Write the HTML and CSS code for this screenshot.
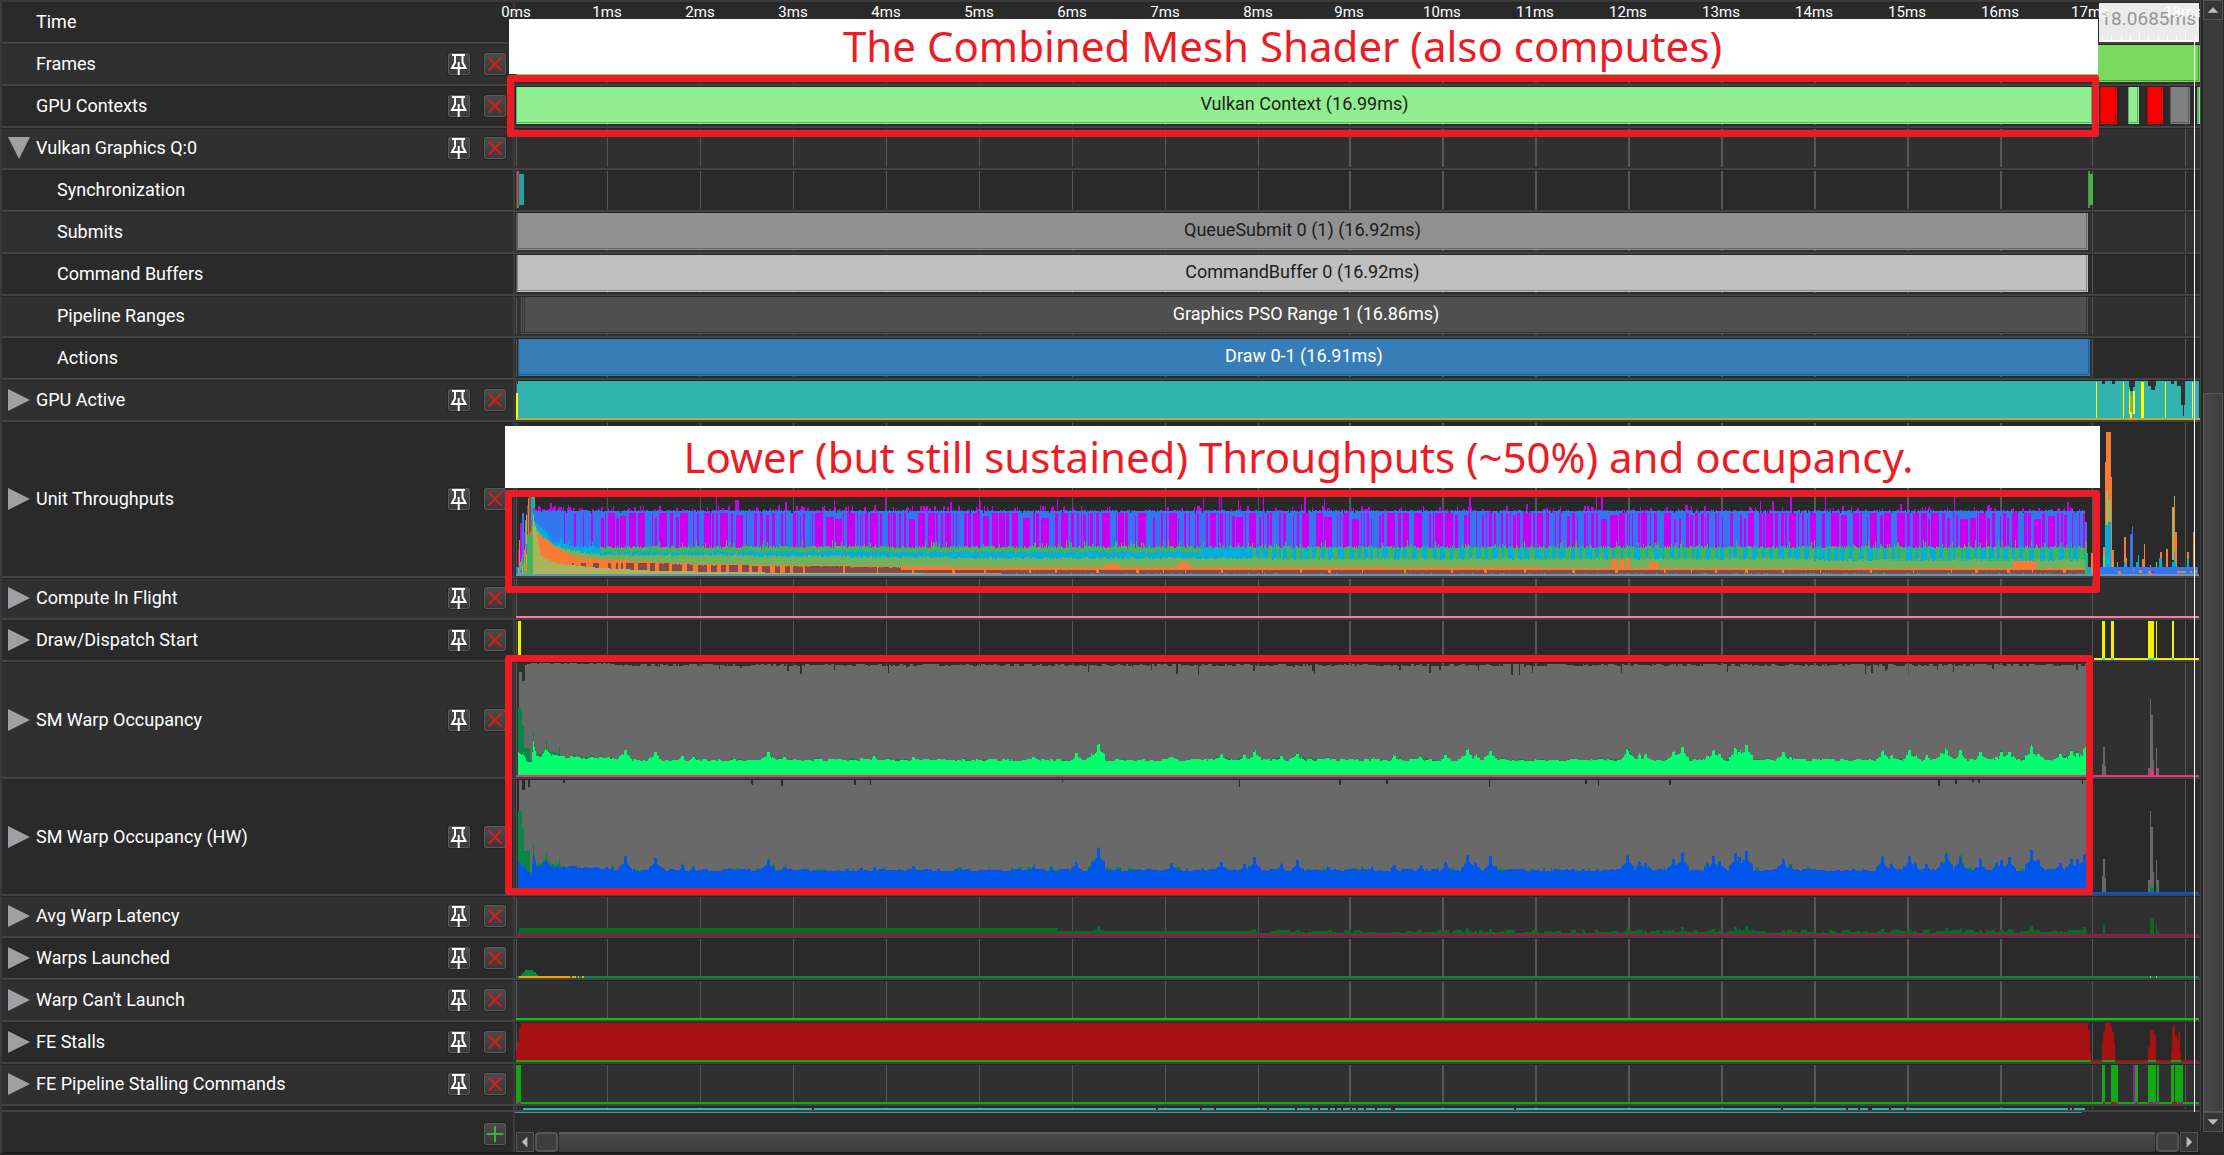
FILE: index.html
```html
<!DOCTYPE html>
<html lang="en">
<head>
<meta charset="utf-8">
<title>GPU Trace Timeline</title>
<link rel="stylesheet" href="styles.css">
</head>
<body>
<svg class="defs" aria-hidden="true">
  <symbol id="pin" viewBox="0 0 22 22">
    <path d="M4 2H17M7 2.500V9.500L4 15H17.500L14.500 9.500V2.500M10.700 9V22" fill="none" stroke="#fff" stroke-width="2"/>
  </symbol>
  <symbol id="cross" viewBox="0 0 22 22">
    <path d="M4.500 4.500L17.500 17.500M17.500 4.500L4.500 17.500" fill="none" stroke="#e01b1b" stroke-width="1.800"/>
  </symbol>
  <symbol id="plus" viewBox="0 0 22 22">
    <path d="M11 3V19M2.500 11H19.500" fill="none" stroke="#3fae49" stroke-width="2"/>
  </symbol>
  <symbol id="closed" viewBox="0 0 22 22"><path d="M0 0L22 11L0 22Z" fill="#a09fa4"/></symbol>
  <symbol id="open" viewBox="0 0 22 22"><path d="M0 0H22L11 22Z" fill="#a09fa4"/></symbol>
</svg>
<main class="timeline">
  <div class="rows" id="rows">
    <div class="row row-time">
      <div class="label"><span class="name">Time</span></div>
      <div class="track" id="ruler"></div>
    </div>
  </div>
  <div class="vscroll">
    <button class="arrow" aria-label="Scroll up"><svg viewBox="0 0 20 20"><path d="M4 13L10 7L16 13Z"/></svg></button>
    <div class="vtrack"><div class="vthumb"></div></div>
    <button class="arrow" aria-label="Scroll down"><svg viewBox="0 0 20 20"><path d="M4 7L10 13L16 7Z"/></svg></button>
  </div>
  <div class="playhead"></div>
  <div class="banner banner-top">The Combined Mesh Shader (also computes)</div>
  <div class="frame frame-context"></div>
  <div class="banner banner-mid">Lower (but still sustained) Throughputs (~50%) and occupancy.</div>
  <div class="frame frame-units"></div>
  <div class="frame frame-warps"></div>
  <footer class="footer">
    <div class="label"><button class="tool" aria-label="Add row"><svg><use href="#plus"/></svg></button></div>
    <div class="foot-plot">
      <div class="overflow-line"></div>
      <div class="hscroll">
        <button class="arrow" aria-label="Scroll left"><svg viewBox="0 0 20 20"><path d="M13 3L6 10L13 17Z"/></svg></button>
        <div class="grip"></div>
        <div class="htrack"></div>
        <div class="grip"></div>
        <button class="arrow" aria-label="Scroll right"><svg viewBox="0 0 20 20"><path d="M7 3L14 10L7 17Z"/></svg></button>
      </div>
    </div>
  </footer>
</main>
<script src="timeline.js"></script>
</body>
</html>
```
FILE: styles.css
```css
* { box-sizing: border-box; }
body {
  margin: 0;
  background: #262626;
  color: #fff;
  font: 18px/20px Roboto, "Liberation Sans", sans-serif;
}
button { padding: 0; margin: 0; border: 0; font: inherit; color: inherit; }
.defs { position: absolute; width: 0; height: 0; }
.timeline {
  position: relative;
  display: grid;
  grid-template-columns: minmax(0, 1fr) 24px;
  border-left: 2px solid #3a3a3a;
  background: #2a2a2a;
}
.row {
  display: grid;
  grid-template-columns: 513px minmax(0, 1fr);
  height: 42px;
  border-bottom: 2px solid #434343;
  background: #303030;
  box-shadow: inset 0 1px #262626;
}
.row:nth-child(odd) { background: #2a2a2a; }
.row-time { height: 44px; border-top: 2px solid #3a3a3a; }
.row-units { height: 156px; }
.row-warps { height: 117px; }
.row-cut { height: 6px; }
.label {
  display: flex;
  align-items: center;
  gap: 14px;
  padding: 0 7px 0 6px;
  border-right: 2px solid #3c3c3c;
}
.label .name { flex: 1; padding-left: 28px; white-space: nowrap; }
.label .twist + .name { padding-left: 0; }
.label .nested { padding-left: 49px; }
.twist { width: 22px; height: 22px; margin-right: -8px; background: none; }
.twist svg, .tool svg { display: block; width: 22px; height: 22px; }
.tool {
  width: 22px;
  height: 22px;
  border-radius: 3px;
  background: linear-gradient(#4a4a4a, #383838);
  box-shadow: inset 0 0 0 1px #5a5a5a, 0 0 0 1px #242424;
}
.track { position: relative; display: flex; min-width: 0; padding: 1px 0 2px; }
.plot { position: absolute; inset: 0; width: 100%; height: 100%; }
.bar {
  position: relative;
  flex: none;
  height: 37px;
  text-align: center;
  font-size: 18px;
  line-height: 33px;
  color: #1c1c1c;
  white-space: nowrap;
  overflow: hidden;
  background: var(--fill);
  box-shadow: inset 1px 0 var(--edge), inset -1px 0 var(--fill), inset 0 -1px var(--fill), inset -2px -2px var(--edge);
}
.bar.light { color: #fff; }
.tick {
  position: absolute;
  top: 1px;
  font-size: 15px;
  line-height: 18px;
  transform: translateX(-50%);
}
.cursor-time {
  position: absolute;
  right: 1px;
  top: 1px;
  width: 100px;
  height: 39px;
  padding: 6px 3px 0 0;
  text-align: right;
  font-size: 19px;
  color: #969696;
  background: #ebebeb;
  border-bottom: 2px solid #fff;
}
.vscroll {
  position: relative;
  display: flex;
  flex-direction: column;
  margin-bottom: -20px;
  padding: 0 1px 0 2px;
  border-left: 1px solid #444;
  background: #262626;
}
.vtrack { flex: 1; display: flex; flex-direction: column; padding-top: 373px; background: #3b3b3b; }
.vthumb { flex: 1; background: linear-gradient(90deg, #484848, #3e3e3e); border: 1px solid #5a5a5a; }
.arrow {
  flex: none;
  width: 20px;
  height: 20px;
  border: 1px solid #555;
  background: #363636;
}
.arrow svg { display: block; width: 18px; height: 18px; fill: #bdbdbd; }
.playhead { position: absolute; right: 29px; top: 40px; width: 1px; height: 1072px; background: #fff; }
.banner {
  position: absolute;
  background: #fff;
  color: #ed1c24;
  text-align: center;
  white-space: nowrap;
  font-family: "Noto Sans", "Open Sans", sans-serif;
}
.banner-top { left: 507px; right: 126px; top: 19px; height: 55px; padding-right: 42px; font-size: 42px; line-height: 54px; }
.banner-mid { left: 503px; right: 124px; top: 426px; height: 62px; padding-right: 8px; font-size: 42px; line-height: 62px; }
.frame { position: absolute; border: 7px solid #ed1c24; border-radius: 3px; }
.frame-context { left: 505px; right: 125px; top: 75px; height: 62px; }
.frame-units { left: 503px; right: 124px; top: 490px; height: 103px; }
.frame-warps { left: 503px; right: 131px; top: 655px; height: 240px; }
.footer {
  grid-column: 1;
  display: grid;
  grid-template-columns: 513px minmax(0, 1fr);
  height: 42px;
  border-bottom: 2px solid #1c1c1c;
}
.footer .label { justify-content: flex-end; padding-top: 4px; }
.foot-plot { display: flex; flex-direction: column; justify-content: space-between; }
.overflow-line { height: 1px; width: 93%; background: #3a9d9d; }
.hscroll { display: flex; gap: 1px; height: 20px; padding: 0 2px 0 1px; background: #262626; }
.hscroll .arrow { width: 18px; }
.hscroll .arrow svg { width: 16px; }
.grip { width: 23px; border: 2px solid #565656; border-radius: 4px; background: #3e3e3e; }
.htrack { flex: 1; background: linear-gradient(#484848, #3e3e3e); border-top: 2px solid #5a5a5a; }
```
FILE: timeline.js
```js
// Horizontal plot units: X0 is the left edge of the tracks, SPAN their width.
const X0 = 515, SPAN = 1685;
const GRID = [516, 607, 700, 793, 886, 979, 1072, 1165, 1258, 1349, 1442, 1535, 1628, 1721, 1814, 1907, 2000, 2092, 2185];

let seed = 20231;
function rnd() {
  seed = (seed * 1664525 + 1013904223) % 4294967296;
  return seed / 4294967296;
}
const pick = n => Math.floor(rnd() * n);

// Collects rectangles and writes them as one path per run of equal colour.
class Plot {
  constructor(height, top) { this.h = height; this.top = top; this.parts = []; }
  r(x, y1, x2, y2, color) {
    if (x2 <= x || y2 <= y1) return;
    const d = `M${x} ${y1 - this.top}H${x2}V${y2 - this.top}H${x}Z`;
    const last = this.parts[this.parts.length - 1];
    if (last && last.color === color) last.d += d;
    else this.parts.push({ color, d });
  }
  svg() {
    return `<svg class="plot" viewBox="${X0} 0 ${SPAN} ${this.h}" preserveAspectRatio="none" shape-rendering="crispEdges" aria-hidden="true">` +
      this.parts.map(p => `<path fill="${p.color}" d="${p.d}"/>`).join('') + '</svg>';
  }
}

function lerp(points, x) {
  if (x <= points[0][0]) return points[0][1];
  for (let i = 1; i < points.length; i++) {
    if (x <= points[i][0]) {
      const [a, ya] = points[i - 1], [b, yb] = points[i];
      return Math.round(ya + (yb - ya) * (x - a) / (b - a));
    }
  }
  return points[points.length - 1][1];
}

function rects(p, color, list) { list.forEach(([a, b, c, d]) => p.r(a, b, c, d, color)); }

function sync(p) {
  p.r(516, 171, 517, 208, '#d01c1c');
  p.r(517, 171, 519, 208, '#1f9c9c');
  p.r(519, 174, 524, 205, '#1aa6a6');
  p.r(518, 174, 519, 205, '#d01c1c');
  p.r(2088, 171, 2090, 208, '#3d9a3b');
  p.r(2089, 174, 2093, 205, '#4daf4a');
}

function active(p) {
  p.r(517, 384, 518, 418, '#33b3b0');
  p.r(518, 381, 2199, 418, '#33b3b0');
  rects(p, '#303030', [[2102, 381, 2105, 384], [2112, 381, 2115, 384], [2129, 381, 2135, 387], [2130, 387, 2133, 391],
    [2148, 381, 2156, 386], [2151, 386, 2155, 390], [2171, 381, 2174, 384], [2177, 381, 2185, 386], [2181, 386, 2185, 405], [2183, 405, 2184, 416]]);
  p.r(516, 393, 518, 420, '#ff0');
  p.r(517, 418, 2200, 420, '#b3b131');
  rects(p, '#ff0', [[2096, 382, 2097, 418], [2123, 382, 2124, 418], [2129, 390, 2130, 414], [2133, 391, 2135, 414], [2130, 412, 2132, 418],
    [2141, 382, 2144, 418], [2165, 382, 2166, 418], [2192, 382, 2193, 418]]);
  rects(p, '#a9b42f', [[2130, 396, 2132, 412]]);
  rects(p, '#ff9d00', [[2129, 418, 2135, 420]]);
}

function units(p) {
  const M = '#cc00ee', B = '#3377f0', G = '#44b45c', C = '#00aedd', L = '#70b35c', O = '#f77a35', W = '#874a4a', V = '#a9b45b';
  // Ramp-up at the start of the draw.
  [[516, 567, B], [518, 550, M], [519, 540, O], [520, 523, M], [522, 513, B], [524, 532, M], [525, 520, G], [526, 515, V],
   [527, 505, W], [528, 498, O], [529, 492, W], [531, 497, C], [533, 497, G]].forEach(([x, y, c]) => {
    p.r(x, y, x + 2, 574, c);
  });
  for (let x = 518; x < 533; x++) {
    let y = 574 - (x - 516) * 3;
    for (let i = 0; i < 6; i++) {
      p.r(x, y, x + 1, y + 8 + pick(12), [G, V, O, L, B, G][pick(6)]);
      y += 10;
    }
  }
  p.r(527, 535, 534, 574, G);
  let magenta = false, run = 0, brown = false, runB = 0, green = false, runG = 0, inset = 0;
  for (let x = 533; x < 2085; x++) {
    const j = pick(3);
    const blue = 511 - (rnd() < 0.3 ? 1 : 0) + (rnd() < 0.06 ? 2 : 0);
    const early = x < 575;
    const top = rnd() < (early ? 0.5 : 0.17) ? blue - 1 - pick(5) - (rnd() < 0.13 ? 4 + pick(9) : 0) : blue;
    if (top < blue) p.r(x, top, x + 1 + (rnd() < 0.5), blue, M);
    p.r(x, blue, x + 1, 574, B);
    if (run-- <= 0) {
      magenta = !magenta;
      const dense = x > 600;
      run = magenta ? (dense ? pick(3) + (rnd() < 0.25 ? 5 : 0) : pick(3)) : (x < 563 ? 3 + pick(10) : dense ? pick(3) + (rnd() < 0.2 ? 4 : 0) : 5 + pick(4));
      inset = rnd() < 0.25 ? 2 + pick(5) : 0;
    }
    const stack = lerp([[533, 520], [545, 530], [552, 541], [580, 546], [700, 546], [2085, 546]], x) + j;
    if (magenta && x > 560) p.r(x, 513 + inset, x + 1, stack + 2, M);
    if (runG-- <= 0) { green = !green; runG = 1 + pick(x > 1250 ? 5 : 9); }
    const gTop = stack - (rnd() < 0.1 ? 3 + pick(4) : 0);
    const cTop = x < 600 ? gTop : x > 1250 && green ? 560 : stack + (x > 1200 ? pick(3) : 4 + pick(3));
    p.r(x, gTop, x + 1, 574, x < 600 ? (green ? G : C) : G);
    p.r(x, cTop, x + 1, 574, C);
    const lTop = lerp([[533, 525], [545, 540], [560, 548], [600, 555], [700, 555], [1000, 558], [2085, 560]], x) + pick(3) - 1;
    p.r(x, lTop, x + 1, 574, L);
    let bump = 0;
    if (x > 1104 && x < 1120) bump = 3;
    if (x > 1177 && x < 1190) bump = 5;
    if (x > 1608 && x < 1630) bump = x % 7 > 1 ? 10 : 0;
    if (x > 1648 && x < 1658) bump = 6;
    if (x > 2012 && x < 2036) bump = 7;
    const oTop = lerp([[533, 530], [545, 538], [555, 547], [575, 556], [600, 559], [700, 564], [1000, 567], [2085, 568]], x) - bump + (rnd() < 0.2 ? 1 : 0);
    p.r(x, oTop, x + 1, 574, O);
    const vTop = lerp([[533, 515], [540, 555], [548, 560], [560, 564], [600, 568], [660, 571], [800, 573], [1050, 574]], x);
    if (runB-- <= 0) { brown = !brown; runB = brown ? (x > 800 ? 20 + pick(30) : 1 + pick(9)) : (x > 800 ? pick(3) : 2 + pick(x > 615 ? 3 : 9)); }
    if (brown && x > 570) p.r(x, Math.max(oTop + 1, x > 900 ? 570 : 563), x + 1, 573, W);
    p.r(x, vTop, x + 1, 574, V);
    if (x > 1000) p.r(x, 573, x + 1, 574, rnd() < 0.1 ? G : W);
  }
  p.r(2085, 522, 2087, 574, B);
  p.r(2085, 541, 2087, 574, G);
  p.r(2087, 553, 2088, 574, C);
  p.r(2088, 567, 2091, 574, C);
  p.r(2091, 553, 2093, 574, O);
  rects(p, O, [[2103, 547, 2105, 567], [2105, 462, 2106, 567], [2106, 432, 2111, 567], [2111, 477, 2112, 567], [2112, 550, 2114, 567],
    [2117, 562, 2118, 567], [2124, 537, 2126, 567], [2126, 558, 2127, 567], [2142, 559, 2144, 567], [2144, 544, 2145, 567],
    [2160, 552, 2162, 567], [2166, 549, 2168, 567], [2174, 500, 2175, 567], [2175, 532, 2177, 567], [2187, 552, 2189, 567], [2193, 532, 2194, 567]]);
  rects(p, V, [[2103, 555, 2105, 574], [2106, 490, 2108, 567], [2108, 500, 2111, 567], [2112, 562, 2114, 574], [2172, 507, 2174, 560], [2174, 496, 2175, 502], [2150, 565, 2151, 567], [2156, 562, 2157, 574]]);
  rects(p, C, [[2105, 525, 2108, 567], [2108, 522, 2111, 567], [2124, 562, 2126, 567], [2136, 562, 2138, 567], [2138, 555, 2139, 567],
    [2159, 558, 2162, 567], [2172, 562, 2176, 567], [2174, 552, 2175, 567], [2187, 559, 2189, 567]]);
  rects(p, B, [[2100, 567, 2198, 574], [2130, 534, 2132, 567], [2132, 526, 2133, 567]]);
  rects(p, O, [[2118, 571, 2121, 574], [2133, 569, 2134, 571], [2139, 570, 2142, 573], [2148, 571, 2152, 574], [2177, 571, 2186, 573], [2190, 571, 2192, 573], [2195, 570, 2197, 573]]);
  p.r(2151, 571, 2154, 573, M);
  p.r(516, 574, 2199, 576, '#6a93b8');
}

const BUMPS = [[625, 9], [655, 8], [682, 3], [693, 3], [768, 7], [784, 3], [861, 2], [874, 3], [913, 3], [1033, 3], [1051, 2], [1076, 6], [1092, 6], [1098, 15],
  [1171, 4], [1221, 6], [1244, 5], [1254, 9], [1281, 4], [1297, 7], [1328, 3], [1372, 2], [1394, 4], [1420, 3], [1445, 5], [1467, 10], [1475, 5], [1490, 9],
  [1627, 10], [1639, 6], [1645, 6], [1673, 8], [1682, 12], [1707, 5], [1713, 9], [1719, 6], [1735, 12], [1739, 9], [1746, 14], [1783, 8], [1790, 4],
  [1882, 9], [1891, 5], [1909, 9], [1915, 4], [1926, 4], [1941, 6], [1946, 11], [1960, 9], [1980, 7], [1996, 4], [2001, 7], [2009, 9],
  [2031, 14], [2038, 7], [2060, 5], [2071, 8], [2077, 8], [2084, 12]];

function lift(x) {
  let best = 0;
  for (const [c, h] of BUMPS) {
    const d = Math.abs(x - c);
    if (d < 7) best = Math.max(best, d < 2 ? h : h * 0.6 - d * 0.6);
  }
  return best;
}

// Warp occupancy: grey idle area, dark-green shoulder, bright lower band.
function warps(p, o) {
  const gray = '#696969', dark = '#078646';
  const { y0, base, end, scale, color, line, deep } = o;
  let dip = 0, v = 0, n = 0, hold = 0, wob = 0;
  for (let x = 518; x < 2087; x++) {
    if (v-- <= 0) {
      v = pick(4);
      dip = deep ? 1 + pick(3) : 0;
      if (rnd() < (deep ? 0.08 : 0.02)) { dip += 2 + pick(deep ? 9 : 6); v = pick(2); }
      if (deep && x > 525 && x < 615) dip = pick(2);
    }
    let top = y0 + dip;
    if (x < 519) top = y0 + 50;
    else if (x < 522) top = y0 + (deep ? 9 : 0);
    else if (x < 525) top = y0 + (deep ? 18 : 10);
    p.r(x, top, x + 1, end, gray);
    if (hold-- <= 0) { hold = pick(5); wob = pick(3) - 1; n = rnd() < 0.2 ? 1 + pick(2) : 0; }
    const level = lerp([[518, base - 9], [525, base - 2], [527, base + 3], [531, base + 3], [533, base - 18], [536, base - 4], [541, base - 3], [545, base - 11],
      [550, base - 5], [560, base - 3], [600, base - 2], [640, base], [2087, base]], x) - Math.round(lift(x) * scale) + wob;
    let shade = level - n;
    if (x < 522) shade = o.peak;
    else if (x < 524) shade = o.peak + 18;
    else if (x < 530) shade = o.peak + 40;
    else if (x < 560) shade = level - 2 - (x % 13 === 0 ? 7 : pick(2));
    p.r(x, shade, x + 1, end, dark);
    p.r(x, level, x + 1, end, color);
  }
  const k = o.spike;
  rects(p, gray, [[2102, k + 65, 2103, end], [2103, k + 48, 2105, end], [2105, k + 67, 2106, end], [2148, k + 69, 2150, end], [2150, k, 2151, end],
    [2151, k + 16, 2153, end], [2153, k + 61, 2154, end], [2156, k + 49, 2157, end], [2157, k + 69, 2159, end]]);
  rects(p, o.spikeColor, [[2150, end - 7, 2151, end], [2151, end - 4, 2154, end], [2156, end - 7, 2157, end]]);
  p.r(516, end, 2199, end + 2, line);
}

function latency(p) {
  const g = '#0a6b24';
  p.r(518, 931, 519, 934, g);
  p.r(519, 928, 1058, 934, g);
  let hold = 0, h = 1;
  for (let x = 1058; x < 2087; x++) {
    if (hold-- <= 0) { hold = 1 + pick(6); h = 1 + pick(4); }
    p.r(x, 934 - Math.max(x < 1250 ? 3 : h, Math.round(lift(x) * 0.55)), x + 1, 934, g);
  }
  rects(p, g, [[2103, 925, 2105, 934], [2150, 918, 2154, 934], [2156, 924, 2157, 934], [2157, 931, 2159, 934]]);
  p.r(516, 934, 2199, 936, '#a5114a');
}

function launched(p) {
  const g = '#078646';
  rects(p, g, [[516, 976, 2199, 978], [521, 974, 538, 976], [523, 972, 536, 974], [525, 970, 533, 972]]);
  rects(p, '#f5a300', [[519, 976, 570, 978], [572, 976, 576, 978], [578, 976, 579, 978], [582, 976, 584, 978], [2150, 976, 2151, 978], [2156, 976, 2157, 978]]);
}

function stalls(p) {
  const r = '#a81111', g = '#12a812';
  rects(p, r, [[516, 1050, 517, 1060], [517, 1041, 519, 1060], [519, 1027, 521, 1060], [521, 1023, 2088, 1060], [2088, 1030, 2090, 1060], [2090, 1053, 2091, 1060],
    [2102, 1042, 2103, 1060], [2103, 1033, 2105, 1060], [2105, 1023, 2111, 1060], [2111, 1026, 2112, 1060], [2112, 1032, 2114, 1060], [2114, 1042, 2115, 1060],
    [2148, 1047, 2150, 1060], [2150, 1030, 2154, 1060], [2154, 1035, 2156, 1060], [2171, 1050, 2172, 1060], [2172, 1027, 2174, 1060], [2174, 1024, 2175, 1060],
    [2175, 1036, 2177, 1060], [2177, 1041, 2178, 1060], [2178, 1032, 2180, 1060], [2180, 1054, 2181, 1060], [2091, 1060, 2199, 1062]]);
  rects(p, g, [[516, 1060, 2091, 1062], [2102, 1060, 2115, 1062], [2148, 1060, 2156, 1062], [2171, 1060, 2181, 1062]]);
}

function stalling(p) {
  const g = '#12a812';
  rects(p, g, [[516, 1065, 521, 1102], [516, 1102, 2199, 1104], [2102, 1065, 2105, 1102], [2111, 1065, 2118, 1102], [2135, 1065, 2138, 1102],
    [2148, 1065, 2156, 1102], [2157, 1065, 2159, 1102], [2171, 1065, 2174, 1102], [2175, 1065, 2183, 1102]]);
  rects(p, '#a811a8', [[517, 1102, 521, 1104], [2133, 1065, 2135, 1102], [2135, 1102, 2138, 1104], [2148, 1102, 2156, 1104], [2157, 1102, 2159, 1104], [2115, 1102, 2118, 1104], [2178, 1102, 2183, 1104]]);
  rects(p, '#a81111', [[2103, 1102, 2105, 1104], [2111, 1102, 2115, 1104], [2172, 1102, 2177, 1104]]);
}

function dispatch(p) {
  p.r(2094, 658, 2199, 660, '#f5f000');
  rects(p, '#f5f000', [[518, 621, 521, 660], [2102, 621, 2105, 658], [2111, 621, 2114, 658], [2148, 621, 2154, 658], [2156, 621, 2157, 658], [2172, 621, 2174, 658]]);
  rects(p, '#19e6d8', [[2102, 658, 2105, 660], [2111, 658, 2114, 660], [2148, 658, 2154, 660], [2172, 658, 2174, 660]]);
}

function cut(p) {
  p.r(523, 1108, 2085, 1110, '#33b3b0');
  [812, 1156, 1200, 1214, 1267, 1295, 1310, 1318, 1328, 1335, 1341, 1350, 1356, 1364, 1375, 1391, 1393, 1514, 1781, 1846, 1858, 1868, 1870, 1889, 1904, 2068, 2072]
    .forEach(x => p.r(x, 1108, x + 2, 1110, '#2a2a2a'));
}

const ROWS = [
  { name: 'Frames', tools: true, bars: [[516, 2200, '#7ad960', '#559943', '']] },
  { name: 'GPU Contexts', tools: true, bars: [[516, 2093, '#90ee90', '#65a765', 'Vulkan Context (16.99ms)'], [2100, 2117, '#ff0000', '#b30000', ''], [2128, 2139, '#90ee90', '#65a765', ''],
    [2147, 2163, '#ff0000', '#b30000', ''], [2170, 2190, '#808080', '#5a5a5a', ''], [2197, 2200, '#90ee90', '#65a765', '']] },
  { name: 'Vulkan Graphics Q:0', tools: true, twist: 'open' },
  { name: 'Synchronization', nested: true, draw: sync },
  { name: 'Submits', nested: true, bars: [[517, 2088, '#909090', '#656565', 'QueueSubmit 0 (1) (16.92ms)']] },
  { name: 'Command Buffers', nested: true, bars: [[517, 2088, '#c0c0c0', '#868686', 'CommandBuffer 0 (16.92ms)']] },
  { name: 'Pipeline Ranges', nested: true, bars: [[520, 524, '#505050', '#383838', ''], [524, 2088, '#505050', '#383838', 'Graphics PSO Range 1 (16.86ms)', true]] },
  { name: 'Actions', nested: true, bars: [[518, 2090, '#377eb8', '#265881', 'Draw 0-1 (16.91ms)', true]] },
  { name: 'GPU Active', tools: true, twist: 'closed', draw: active },
  { name: 'Unit Throughputs', tools: true, twist: 'closed', cls: 'row-units', h: 156, draw: units },
  { name: 'Compute In Flight', tools: true, twist: 'closed', draw: p => p.r(516, 616, 2199, 618, '#ff7b9c') },
  { name: 'Draw/Dispatch Start', tools: true, twist: 'closed', draw: dispatch },
  { name: 'SM Warp Occupancy', tools: true, twist: 'closed', cls: 'row-warps', h: 117,
    draw: p => warps(p, { y0: 663, base: 760, end: 775, scale: 1, color: '#00ff6e', line: '#f0307c', deep: true, peak: 708, spike: 699, spikeColor: '#f0307c' }) },
  { name: 'SM Warp Occupancy (HW)', tools: true, twist: 'closed', cls: 'row-warps', h: 117,
    draw: p => warps(p, { y0: 780, base: 870, end: 892, scale: 1.4, color: '#0055ea', line: '#0055ea', deep: false, peak: 811, spike: 811, spikeColor: '#078646' }) },
  { name: 'Avg Warp Latency', tools: true, twist: 'closed', draw: latency },
  { name: 'Warps Launched', tools: true, twist: 'closed', draw: launched },
  { name: "Warp Can't Launch", tools: true, twist: 'closed', draw: p => p.r(516, 1018, 2199, 1020, '#0c0') },
  { name: 'FE Stalls', tools: true, twist: 'closed', draw: stalls },
  { name: 'FE Pipeline Stalling Commands', tools: true, twist: 'closed', draw: stalling },
  { name: '', cls: 'row-cut', h: 6, draw: cut }
];

const pct = n => (n / SPAN * 100).toFixed(4) + '%';
const host = document.getElementById('rows');
let y = 44;
for (const row of ROWS) {
  const h = row.h || 42;
  const plot = new Plot(h - 2, y);
  GRID.forEach((x, i) => plot.r(x, y + 1, x + (i > 8 && i < 17 ? 2 : 1), y + h - 3, '#565656'));
  if (row.draw) row.draw(plot);
  let at = X0;
  const bars = (row.bars || []).map(([a, b, fill, edge, text, light]) => {
    const html = `<div class="bar${light ? ' light' : ''}" style="margin-left:${pct(a - at)};width:${pct(b - a)};--fill:${fill};--edge:${edge}">${text}</div>`;
    at = b;
    return html;
  }).join('');
  const twist = row.twist ? `<button class="twist" aria-label="Toggle ${row.name}"><svg><use href="#${row.twist}"/></svg></button>` : '';
  const tools = row.tools ? `<button class="tool" aria-label="Pin ${row.name}"><svg><use href="#pin"/></svg></button><button class="tool" aria-label="Remove ${row.name}"><svg><use href="#cross"/></svg></button>` : '';
  host.insertAdjacentHTML('beforeend',
    `<div class="row ${row.cls || ''}"><div class="label">${twist}<span class="name${row.nested ? ' nested' : ''}">${row.name}</span>${tools}</div><div class="track">${plot.svg()}${bars}</div></div>`);
  y += h;
}

const ruler = document.getElementById('ruler');
const marks = new Plot(40, 2);
for (let i = 0; i < 11; i++) {
  const x = 2102 + Math.round(i * 9.25);
  marks.r(x, i === 4 ? 33 : i === 9 ? 30 : 36, x + 1, 40, '#fff');
}
ruler.innerHTML = '<div class="cursor-time">18.0685ms</div>' + marks.svg() +
  GRID.map((x, i) => `<span class="tick" style="left:${pct(x - X0 + (i > 16 ? -2 : 0))}">${i}ms</span>`).join('');
```
